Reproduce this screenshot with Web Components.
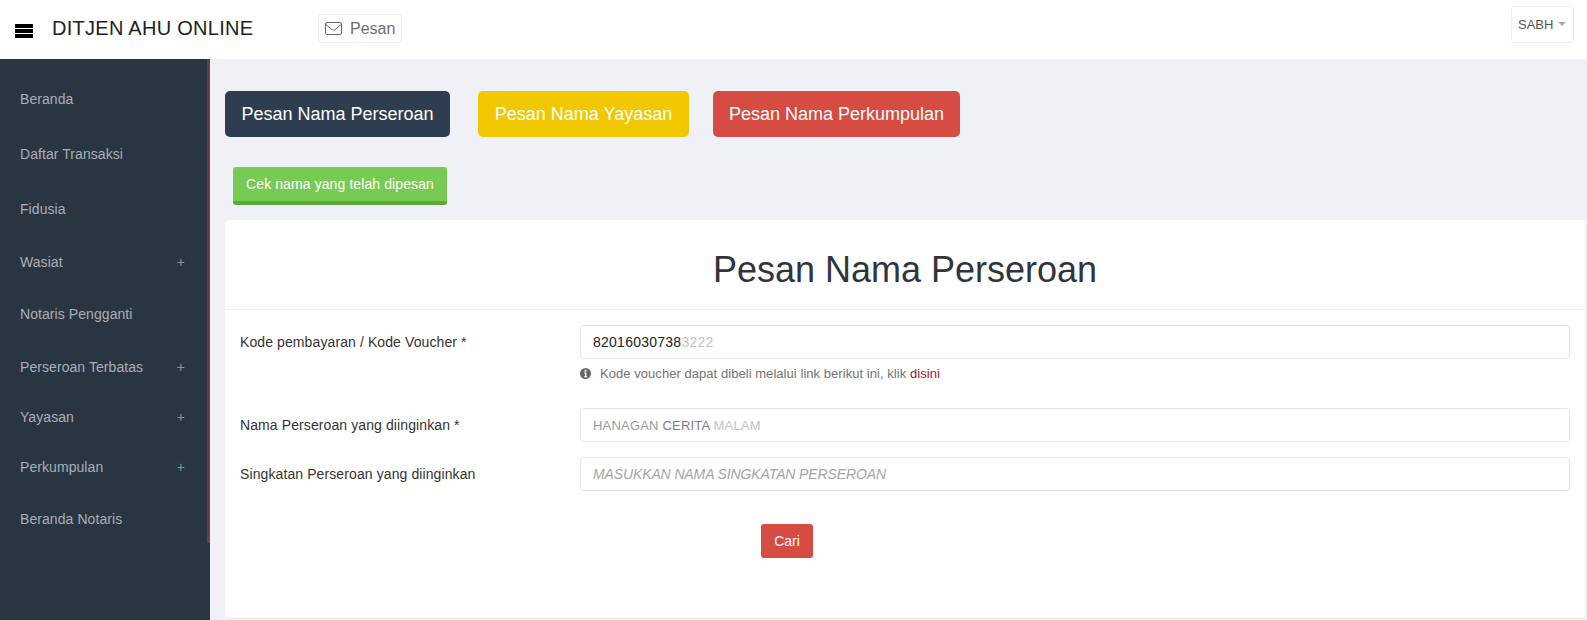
<!DOCTYPE html>
<html lang="id"><head><meta charset="utf-8"><title>DITJEN AHU ONLINE</title>
<style>
html,body{margin:0;padding:0;height:620px;overflow:hidden;background:#f0f1f7;font-family:"Liberation Sans",Arial,sans-serif}
</style></head><body>
<ahu-app>
  <ahu-topbar slot="top"></ahu-topbar>
  <ahu-sidebar slot="side">
    <ahu-nav-item h="55">Beranda</ahu-nav-item>
    <ahu-nav-item h="55">Daftar Transaksi</ahu-nav-item>
    <ahu-nav-item h="56">Fidusia</ahu-nav-item>
    <ahu-nav-item h="49" plus>Wasiat</ahu-nav-item>
    <ahu-nav-item h="55">Notaris Pengganti</ahu-nav-item>
    <ahu-nav-item h="52" plus>Perseroan Terbatas</ahu-nav-item>
    <ahu-nav-item h="47" plus>Yayasan</ahu-nav-item>
    <ahu-nav-item h="54" plus>Perkumpulan</ahu-nav-item>
    <ahu-nav-item h="49">Beranda Notaris</ahu-nav-item>
  </ahu-sidebar>
  <ahu-main slot="main">
    <ahu-tabs>
      <ahu-tab-btn color="#2e3e50" w="225">Pesan Nama Perseroan</ahu-tab-btn>
      <ahu-tab-btn color="#f1c800" w="211">Pesan Nama Yayasan</ahu-tab-btn>
      <ahu-tab-btn color="#d74c42" w="247">Pesan Nama Perkumpulan</ahu-tab-btn>
    </ahu-tabs>
    <ahu-check-btn>Cek nama yang telah dipesan</ahu-check-btn>
    <ahu-card title="Pesan Nama Perseroan">
      <ahu-field label="Kode pembayaran / Kode Voucher *" mb="49">
        <span style="color:#222;letter-spacing:.25px">82016030738</span><span style="color:#c2c2c2;letter-spacing:.25px">3222</span>
        <ahu-help slot="help">Kode voucher dapat dibeli melalui link berikut ini, klik <a href="#" style="color:#b3102a;text-decoration:none">disini</a></ahu-help>
      </ahu-field>
      <ahu-field label="Nama Perseroan yang diinginkan *" mb="15">
        <span style="font-size:13px;letter-spacing:.2px"><span style="color:#9a9a9a">HANAGAN </span><span style="color:#808080">CERITA </span><span style="color:#c4c4c4">MALAM</span></span>
      </ahu-field>
      <ahu-field label="Singkatan Perseroan yang diinginkan" mb="33">
        <span style="color:#a4a4a4;font-style:italic;letter-spacing:-.12px">MASUKKAN NAMA SINGKATAN PERSEROAN</span>
      </ahu-field>
      <ahu-submit>Cari</ahu-submit>
    </ahu-card>
  </ahu-main>
</ahu-app>
<script>
function def(name, html, init){
  const t=document.createElement('template');t.innerHTML=html;
  customElements.define(name,class extends HTMLElement{
    constructor(){super();this.attachShadow({mode:'open'}).appendChild(t.content.cloneNode(true));}
    connectedCallback(){init&&init(this,this.shadowRoot);}
  });
}
def('ahu-app',`<style>
:host{display:grid;grid-template-columns:210px 1fr;grid-template-rows:59px 561px;width:1587px;height:620px}
.t{grid-column:1/3}
</style><div class="t"><slot name="top"></slot></div><slot name="side"></slot><slot name="main"></slot>`);

def('ahu-topbar',`<style>
:host{display:flex;align-items:center;height:59px;background:#fff;box-sizing:border-box;color:#222}
.burger{width:18px;height:14px;margin:3px 0 0 15px;display:flex;flex-direction:column;justify-content:space-between}
.burger i{display:block;height:3.600px;background:#000}
.brand{font-size:20px;letter-spacing:.27px;margin-left:19px;width:266px;white-space:nowrap;margin-top:-2px}
.msg{display:flex;align-items:center;box-sizing:border-box;height:29px;width:84px;margin-top:-2px;border:1px solid #eeeeee;border-radius:3px;color:#707070;font-size:16px;padding-left:6px}
.msg svg{margin-right:8px}
.user{margin-left:auto;margin-right:13px;margin-top:-11px;display:flex;align-items:center;box-sizing:border-box;width:63px;height:37px;border:1px solid #eeeeee;border-radius:3px;font-size:13px;color:#555;padding-left:6px}
.caret{width:0;height:0;border:4px solid transparent;border-top-color:#aaa;border-bottom:0;margin-left:5px}
</style>
<div class="burger"><i></i><i></i><i></i></div>
<div class="brand">DITJEN AHU ONLINE</div>
<div class="msg"><svg width="17" height="13" viewBox="0 0 17 13" fill="none" stroke="#666" stroke-width="1"><rect x=".5" y=".5" width="16" height="12" rx="1.5"/><path d="M.8 2.5 7 7.600c.9.7 2.100.7 3 0l6.200-5.100"/></svg><span>Pesan</span></div>
<div class="user"><span>SABH</span><span class="caret"></span></div>`);

def('ahu-sidebar',`<style>
:host{display:block;position:relative;background:#2a3542;height:561px;box-sizing:border-box;padding-top:12px}
.stripe{position:absolute;top:0;right:0;width:3px;height:484px;background:#6b3b46}
</style><div class="stripe"></div><slot></slot>`);

def('ahu-nav-item',`<style>
:host{display:flex;align-items:center;box-sizing:border-box;width:207px;padding:0 22px 0 20px;font-size:14px;letter-spacing:.07px;color:#a9afb6;white-space:nowrap}
.p{margin-left:auto;color:#8d949c;font-size:14px;font-weight:300}
</style><slot></slot><span class="p"></span>`,(el,r)=>{
  el.style.height=el.getAttribute('h')+'px';
  if(el.hasAttribute('plus')) r.querySelector('.p').textContent='+';
});

def('ahu-main',`<style>
:host{display:flex;flex-direction:column;box-sizing:border-box;padding:32px 2px 0 15px;height:561px}
</style><slot></slot>`);

def('ahu-tabs',`<style>
:host{display:flex;height:46px}
::slotted(:nth-child(2)){margin-left:28px}
::slotted(:nth-child(3)){margin-left:24px}
</style><slot></slot>`);

def('ahu-tab-btn',`<style>
:host{display:flex;align-items:center;justify-content:center;box-sizing:border-box;height:46px;border-radius:5px;color:#fff;font-size:18px;white-space:nowrap}
</style><slot></slot>`,(el)=>{
  el.style.background=el.getAttribute('color');el.style.width=el.getAttribute('w')+'px';
});

def('ahu-check-btn',`<style>
:host{display:flex;align-items:center;justify-content:center;box-sizing:border-box;width:214px;height:38px;margin:30px 0 15px 8px;background:#78cb52;border-bottom:4px solid #5fa83e;border-radius:3px;color:#fff;font-size:14px;letter-spacing:.1px;white-space:nowrap}
</style><slot></slot>`);

def('ahu-card',`<style>
:host{display:block;background:#fff;border-radius:4px;border-bottom:1px solid #e6e7ec;box-sizing:border-box;width:1360px;height:399px}
h1{margin:0;height:90px;box-sizing:border-box;border-bottom:1px solid #eeeeee;font-weight:400;font-size:36px;line-height:100px;text-align:center;color:#2f353b}
.b{padding:15px 15px 0}
</style><h1></h1><div class="b"><slot></slot></div>`,(el,r)=>{r.querySelector('h1').textContent=el.getAttribute('title');});

def('ahu-field',`<style>
:host{display:grid;grid-template-columns:340px 990px;font-size:14px;letter-spacing:.1px;color:#333}
.l{line-height:34px}
.i{display:flex;align-items:center;box-sizing:border-box;height:34px;border:1px solid #e2e5ec;border-radius:4px;padding:0 12px;background:#fff;font-size:14px;letter-spacing:0;white-space:pre}
</style><div class="l"></div><div><div class="i"><slot></slot></div><slot name="help"></slot></div>`,(el,r)=>{
  r.querySelector('.l').textContent=el.getAttribute('label');
  el.style.marginBottom=el.getAttribute('mb')+'px';
});

def('ahu-help',`<style>
:host{display:flex;align-items:center;height:16px;margin:6px 0 -22px;font-size:13px;letter-spacing:.05px;color:#737373}
svg{margin-right:9px;flex:none}
</style><svg width="11" height="11" viewBox="0 0 12 12"><circle cx="6" cy="6" r="6" fill="#666"/><rect x="5" y="2" width="2" height="2" fill="#fff"/><path d="M4.500 5H7v4h1v1H4.500V9h1V6h-1z" fill="#fff"/></svg><span><slot></slot></span>`);

def('ahu-submit',`<style>
:host{display:flex;align-items:center;justify-content:center;box-sizing:border-box;width:52px;height:34px;margin-left:521px;background:#d74c42;border-radius:3px;color:#fff;font-size:14px}
</style><slot></slot>`);
</script>
</body></html>
